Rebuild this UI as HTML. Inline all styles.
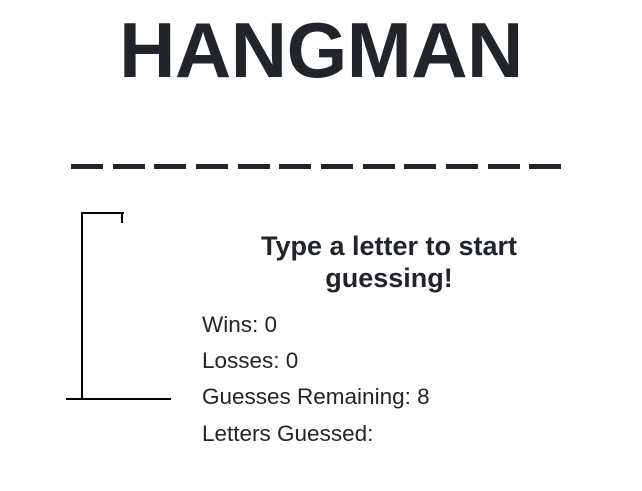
<!DOCTYPE html>
<html><head><meta charset="utf-8"><style>
body{margin:0;width:642px;height:491px;background:#fff;font-family:"Liberation Sans",sans-serif;color:#212529;position:relative;overflow:hidden}
h1{position:absolute;left:0;width:642px;text-align:center;margin:0;font-size:78px;font-weight:bold;top:5px;line-height:90px;letter-spacing:-0.5px}
.d{position:absolute;top:164px;height:5px;width:32px;background:#212529}
.l{position:absolute;background:#000}
.h{position:absolute;left:189px;width:400px;text-align:center;font-weight:bold;font-size:27px;line-height:32px;top:230px}
.s{position:absolute;left:202px;font-size:22.5px;line-height:24px}
</style></head><body>
<h1>HANGMAN</h1>
<div class="d" style="left:71px"></div><div class="d" style="left:113px"></div><div class="d" style="left:154px"></div><div class="d" style="left:196px"></div><div class="d" style="left:238px"></div><div class="d" style="left:279px"></div><div class="d" style="left:321px"></div><div class="d" style="left:363px"></div><div class="d" style="left:404px"></div><div class="d" style="left:446px"></div><div class="d" style="left:488px"></div><div class="d" style="left:529px"></div>
<div class="l" style="left:81px;top:212px;width:2px;height:188px"></div>
<div class="l" style="left:81px;top:212px;width:43px;height:2px"></div>
<div class="l" style="left:121px;top:212px;width:2px;height:11px"></div>
<div class="l" style="left:66px;top:398px;width:105px;height:2px"></div>
<div class="h">Type a letter to start<br>guessing!</div>
<div class="s" style="top:313px">Wins: 0</div>
<div class="s" style="top:349px">Losses: 0</div>
<div class="s" style="top:385px">Guesses Remaining: 8</div>
<div class="s" style="top:422px">Letters Guessed:</div>
</body></html>
